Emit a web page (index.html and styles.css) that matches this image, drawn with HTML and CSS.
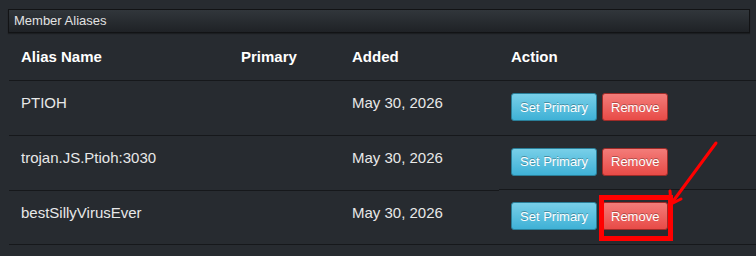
FILE: index.html
```html
<!DOCTYPE html>
<html>
<head>
<meta charset="utf-8">
<link rel="stylesheet" href="styles.css">
</head>
<body>
<div class="page">
  <div class="panel-heading">Member Aliases</div>
  <table class="aliases">
    <thead>
      <tr><th class="c1">Alias Name</th><th class="c2">Primary</th><th class="c3">Added</th><th class="c4">Action</th></tr>
    </thead>
    <tbody>
      <tr><td>PTIOH</td><td></td><td>May 30, 2026</td><td class="actions"><button class="btn btn-info">Set Primary</button><button class="btn btn-danger">Remove</button></td></tr>
      <tr><td>trojan.JS.Ptioh:3030</td><td></td><td>May 30, 2026</td><td class="actions"><button class="btn btn-info">Set Primary</button><button class="btn btn-danger">Remove</button></td></tr>
      <tr><td>bestSillyVirusEver</td><td></td><td>May 30, 2026</td><td class="actions"><button class="btn btn-info">Set Primary</button><button class="btn btn-danger hot">Remove</button></td></tr>
    </tbody>
  </table>
  <svg class="annotation" width="756" height="256" viewBox="0 0 756 256">
    <rect x="601.5" y="197.5" width="69" height="41" fill="none" stroke="#ff0000" stroke-width="5"/>
    <line x1="716" y1="143" x2="671" y2="204" stroke="#ff0000" stroke-width="3" stroke-linecap="round"/>
    <line x1="671" y1="204" x2="670" y2="191" stroke="#ff0000" stroke-width="3" stroke-linecap="round"/>
    <line x1="671" y1="204" x2="681" y2="199" stroke="#ff0000" stroke-width="3" stroke-linecap="round"/>
  </svg>
</div>
</body>
</html>
```
FILE: styles.css
```css
html, body {
  margin: 0;
  padding: 0;
  background: #272b30;
  overflow: hidden;
}
.page {
  position: relative;
  padding: 9px 6px 0 8px;
  font-family: "Liberation Sans", Arial, sans-serif;
  color: #e6e6e6;
}
.panel-heading {
  height: 22px;
  line-height: 22px;
  padding: 0 6px 0 5px;
  font-size: 13px;
  color: #e2e2e2;
  background: linear-gradient(#31363b, #1f2226);
  border: 1px solid #121315;
  box-shadow: 0 1px 1px rgba(0,0,0,0.3);
}
.aliases {
  margin-left: 1px;
  width: calc(100% + 5px);
  border-collapse: collapse;
  font-size: 15px;
}
.aliases th {
  text-align: left;
  font-weight: bold;
  color: #ffffff;
  line-height: 20px;
  padding: 14px 12px 13px;
  border-bottom: 1px solid #16181b;
}
.aliases td {
  vertical-align: top;
  line-height: 20px;
  padding: 12px 12px 13.5px;
  border-bottom: 1px solid #16181b;
  color: #e8e8e8;
}
.c1 { width: 196px; }
.c2 { width: 87px; }
.c3 { width: 135px; }
.actions {
  display: flex;
  gap: 5px;
}
.btn {
  font-family: "Liberation Sans", Arial, sans-serif;
  font-size: 13px;
  height: 28px;
  padding: 0 8px;
  border-radius: 3px;
  color: #ffffff;
  text-shadow: 0 -1px 0 rgba(0,0,0,0.3);
  cursor: pointer;
}
.btn-info {
  width: 86px;
  background: linear-gradient(#78cfe8, #3fb1d6);
  border: 1px solid #2a7f99;
}
.btn-danger {
  width: 66px;
  background: linear-gradient(#f37c79, #e84b47);
  border: 1px solid #9e2b28;
}
.annotation {
  position: absolute;
  left: 0;
  top: 0;
  pointer-events: none;
}
```
